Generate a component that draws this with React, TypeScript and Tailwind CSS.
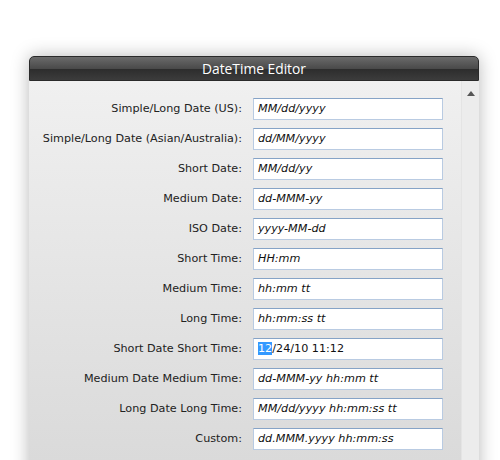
import React from 'react';

const rows: { label: string; value: string; selected?: boolean }[] = [
  { label: 'Simple/Long Date (US):', value: 'MM/dd/yyyy' },
  { label: 'Simple/Long Date (Asian/Australia):', value: 'dd/MM/yyyy' },
  { label: 'Short Date:', value: 'MM/dd/yy' },
  { label: 'Medium Date:', value: 'dd-MMM-yy' },
  { label: 'ISO Date:', value: 'yyyy-MM-dd' },
  { label: 'Short Time:', value: 'HH:mm' },
  { label: 'Medium Time:', value: 'hh:mm tt' },
  { label: 'Long Time:', value: 'hh:mm:ss tt' },
  { label: 'Short Date Short Time:', value: '12/24/10 11:12', selected: true },
  { label: 'Medium Date Medium Time:', value: 'dd-MMM-yy hh:mm tt' },
  { label: 'Long Date Long Time:', value: 'MM/dd/yyyy hh:mm:ss tt' },
  { label: 'Custom:', value: 'dd.MMM.yyyy hh:mm:ss' },
];

const App: React.FC = () => {
  return (
    <div className="h-[460px] w-[500px] overflow-hidden bg-white font-['DejaVu_Sans',sans-serif]">
      <div className="ml-[29px] mt-[56px] w-[450px] rounded-t-[5px] shadow-[0_0_18px_rgba(0,0,0,0.28)]">
        {/* Header */}
        <div className="h-[25px] rounded-t-[5px] border border-[#2a2a2a] bg-[linear-gradient(#6a6a6a,#4a4a4a_50%,#2c2c2c_52%,#3c3c3c)] flex items-center justify-center">
          <span className="text-[13.8px] text-white font-['Open_Sans','DejaVu_Sans',sans-serif] leading-none">DateTime Editor</span>
        </div>

        {/* Body */}
        <div className="flex h-[400px] bg-[linear-gradient(#f0f0f0,#dadada_380px)]">
          <div className="flex-1 pt-[17px]">
            <div className="grid grid-cols-[213px_190px] gap-x-[11px] gap-y-[8px] items-center">
              {rows.map((r) => (
                <React.Fragment key={r.label}>
                  <div className="text-right text-[11.2px] text-[#222]">{r.label}</div>
                  <div className="h-[22px] bg-white border border-[#b9cbe2] border-t-[#86a3c6] flex items-center px-[4px] text-[11.2px] text-[#111]">
                    {r.selected ? (
                      <span>
                        <span className="bg-[#3399ff] text-white">12</span>/24/10 11:12
                      </span>
                    ) : (
                      <span className="italic">{r.value}</span>
                    )}
                  </div>
                </React.Fragment>
              ))}
            </div>
          </div>
          {/* Scrollbar */}
          <div className="w-[18px] bg-[#ececec] flex flex-col items-center justify-between pt-[10px] pb-[6px] border-l border-[#e4e4e4]">
            <svg width="8" height="5" viewBox="0 0 8 5">
              <path d="M4 0 L8 5 L0 5 Z" fill="#555" />
            </svg>
            <svg width="8" height="5" viewBox="0 0 8 5">
              <path d="M0 0 L8 0 L4 5 Z" fill="#555" />
            </svg>
          </div>
        </div>
      </div>
    </div>
  );
};

export default App;
